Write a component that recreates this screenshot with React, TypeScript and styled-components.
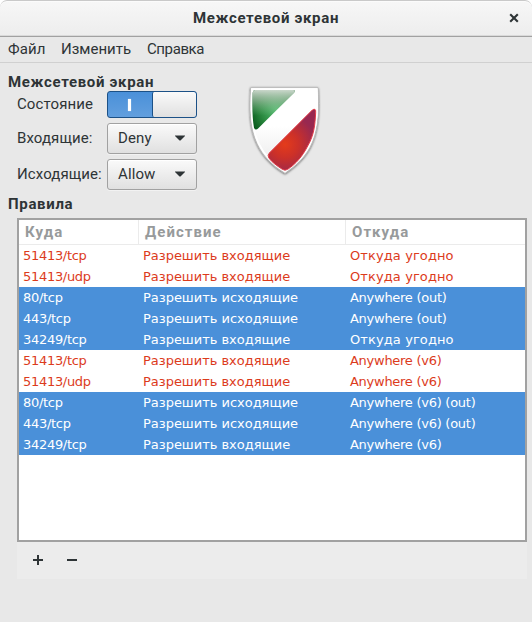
import React from 'react';
import styled, { createGlobalStyle } from 'styled-components';

const GlobalStyle = createGlobalStyle`
  * { box-sizing: border-box; }
  body { margin: 0; background: #fff; }
  button { font: inherit; color: inherit; letter-spacing: inherit; border: 0; padding: 0; background: none; }
`;

const Window = styled.div`
  width: 532px;
  height: 622px;
  overflow: hidden;
  display: flex;
  flex-direction: column;
  background: #e8e8e8;
  border-radius: 7px 7px 0 0;
  color: #2e3436;
  font-family: Roboto, sans-serif;
  font-size: 15px;
  line-height: 20px;
  white-space: nowrap;
`;

const TitleBar = styled.header`
  height: 37px;
  flex: none;
  display: grid;
  grid-template-columns: 36px 1fr 36px;
  align-items: center;
  padding-bottom: 2px;
  background: linear-gradient(#f7f7f7, #ededed);
  border: 1px solid #c9c9c9;
  border-width: 1px 0 1px;
  border-bottom-color: #a1a1a1;
  border-radius: 7px 7px 0 0;
  box-shadow: inset 0 1px #fbfbfb, inset 0 -1px #d9d9d9;
`;

const Title = styled.h1`
  grid-column: 2;
  margin: 0;
  text-align: center;
  font-size: 15px;
  font-weight: 700;
  letter-spacing: 0.67px;
`;

const CloseButton = styled.button`
  display: flex;
  justify-content: center;
`;

const MenuBar = styled.nav`
  height: 26px;
  flex: none;
  display: flex;
  align-items: center;
  gap: 16px;
  padding: 0 0 1px 8px;
  border-bottom: 1px solid #d0d0d0;
`;

const MenuItem = styled.button<{ $width: number; $spacing: number }>`
  width: ${(p) => p.$width}px;
  text-align: left;
  letter-spacing: ${(p) => p.$spacing}px;
`;

const Content = styled.main`
  flex: 1;
  padding: 9px 5px 0 8px;
`;

const SectionTitle = styled.h2`
  margin: 0;
  font-size: 15px;
  font-weight: 700;
  line-height: 20px;
  letter-spacing: 0.67px;
`;

const Overview = styled.div`
  display: flex;
  height: 102px;
`;

const Settings = styled.div`
  display: grid;
  grid-template-columns: 90px 90px;
  grid-template-rows: 27px 31px 31px;
  row-gap: 5px;
  align-content: start;
  padding-left: 9px;
  margin-top: -1px;
`;

const Label = styled.label<{ $spacing: number }>`
  align-self: center;
  padding-bottom: 2px;
  letter-spacing: ${(p) => p.$spacing}px;
`;

const Toggle = styled.button`
  display: grid;
  grid-template-columns: 45px 45px;
  height: 27px;
  border: 1px solid #1c5187;
  border-radius: 3px;
  background: linear-gradient(#4a90d9, #629fde);
  overflow: hidden;
`;

const ToggleOn = styled.span`
  display: flex;
  align-items: center;
  justify-content: center;
  height: 25px;
`;

const ToggleMark = styled.i`
  width: 3px;
  height: 12px;
  margin-left: -2px;
  background: #fff;
  box-shadow: 0 0 1px #fff;
`;

const ToggleKnob = styled.span`
  width: 44px;
  height: 25px;
  margin-left: -1px;
  border-left: 1px solid #1c5187;
  border-radius: 2px;
  background: linear-gradient(#fafafa, #e0e0e0);
`;

const Select = styled.button`
  display: flex;
  align-items: center;
  justify-content: space-between;
  height: 31px;
  padding: 0 11px 2px 10px;
  border: 1px solid #a1a1a1;
  border-radius: 3px;
  background: linear-gradient(#fafafa, #e0e0e0);
  box-shadow: inset 0 1px #fff, 0 1px #f2f2f2;
  letter-spacing: 0.1px;
`;

const ShieldSlot = styled.div`
  margin: -17px 0 0 38px;
  height: 110px;
`;

const Rules = styled.section`
  margin: 4px 0 0 9px;
`;

const Table = styled.div`
  width: 510px;
  height: 324px;
  border: 2px solid #a1a1a1;
  background: #fff;
`;

const HeaderRow = styled.div`
  display: grid;
  grid-template-columns: 120px 207px 1fr;
  height: 25px;
  border-bottom: 1px solid #ebebeb;
`;

const HeaderCell = styled.div`
  padding-left: 6px;
  line-height: 24px;
  border-right: 1px solid #ebebeb;
  font-weight: 700;
  letter-spacing: 1.05px;
  color: #979a9b;
  &:last-child { border-right: 0; }
`;

const Row = styled.div<{ $selected: boolean }>`
  display: grid;
  grid-template-columns: 120px 207px 1fr;
  height: 21px;
  background: ${(p) => (p.$selected ? '#4a90d9' : '#fff')};
  color: ${(p) => (p.$selected ? '#fff' : '#dc3b1c')};
  font-family: 'DejaVu Sans', sans-serif;
  font-size: 13px;
  line-height: 21px;
`;

const Cell = styled.span<{ $spacing: number }>`
  padding-left: 4px;
  letter-spacing: ${(p) => p.$spacing}px;
`;

const Toolbar = styled.div`
  width: 510px;
  height: 37px;
  display: flex;
  align-items: center;
  gap: 24px;
  padding: 0 0 1px 16px;
  background: #ececec;
`;

const ToolButton = styled.button`
  display: flex;
`;

const CloseIcon = () => (
  <svg width="10" height="10" viewBox="0 0 10 10">
    <path d="M1.2 1.2 8.8 8.8M8.8 1.2 1.2 8.8" stroke="#2e3436" strokeWidth="2.1" />
  </svg>
);

const ArrowIcon = () => (
  <svg width="10" height="6" viewBox="0 0 10 6">
    <path d="M0 .5h10v.5L5.5 5.5h-1L0 1z" fill="#2e3436" />
  </svg>
);

const ShieldIcon = () => (
  <svg width="100" height="110" viewBox="0 0 300 330">
    <defs>
      <linearGradient id="face" x1="0" y1="0" x2="0" y2="1">
        <stop offset="0" stopColor="#fff" />
        <stop offset=".45" stopColor="#fff" />
        <stop offset="1" stopColor="#e6e6e6" />
      </linearGradient>
      <radialGradient id="green" gradientUnits="userSpaceOnUse" cx="125" cy="105" r="85">
        <stop offset="0" stopColor="#56bd72" />
        <stop offset=".55" stopColor="#2b8a40" />
        <stop offset="1" stopColor="#07591b" />
      </radialGradient>
      <linearGradient id="gloss" x1="0" y1="0" x2="0" y2="1">
        <stop offset="0" stopColor="#d4ddd4" stopOpacity=".95" />
        <stop offset=".25" stopColor="#b6c9b7" stopOpacity=".65" />
        <stop offset=".65" stopColor="#8cc497" stopOpacity="0" />
      </linearGradient>
      <radialGradient id="red" gradientUnits="userSpaceOnUse" cx="150" cy="208" r="92">
        <stop offset="0" stopColor="#e43b1b" />
        <stop offset=".45" stopColor="#cb3029" />
        <stop offset="1" stopColor="#982850" />
      </radialGradient>
      <filter id="shadow" x="-10%" y="-10%" width="120%" height="120%">
        <feDropShadow dx="0" dy="2" stdDeviation="3.2" floodColor="#000" floodOpacity=".65" />
      </filter>
    </defs>
    <path
      d="M47 38H249C252 96 253 150 232 202C215 245 184 272 150 295C111 272 84 244 67 208C42 155 44 98 47 38Z"
      fill="url(#face)"
      stroke="#aaa"
      strokeWidth="2"
      filter="url(#shadow)"
    />
    <path d="M51 42H245C249 98 248 148 229 198C213 240 184 267 150 290C113 267 87 239 71 205C47 153 48 99 51 42Z" fill="none" stroke="#fff" strokeWidth="5" />
    <path d="M61 45H174Q184 46 177 53L70 160Q61 168 57 158C51 126 52 87 53 54Q54 45 61 45Z" fill="url(#green)" />
    <path d="M61 45H174Q184 46 177 53L70 160Q61 168 57 158C51 126 52 87 53 54Q54 45 61 45Z" fill="url(#gloss)" />
    <path
      d="M232 105Q243 98 242 112C240 151 237 181 218 213C202 245 181 268 158 283Q150 288 142 283C124 271 111 262 101 248Q97 241 103 234Z"
      fill="url(#red)"
      stroke="#e23b48"
      strokeWidth="3"
    />
  </svg>
);

const AddIcon = () => (
  <svg width="10" height="10" viewBox="0 0 10 10">
    <path d="M4 0h2v4h4v2H6v4H4V6H0V4h4z" fill="#2e3436" />
  </svg>
);

const RemoveIcon = () => (
  <svg width="10" height="10" viewBox="0 0 10 10">
    <path d="M0 4h10v2H0z" fill="#2e3436" />
  </svg>
);

const incoming = 'Разрешить входящие';
const outgoing = 'Разрешить исходящие';
const anywhere = 'Откуда угодно';

const rules = [
  { to: '51413/tcp', action: incoming, from: anywhere, selected: false },
  { to: '51413/udp', action: incoming, from: anywhere, selected: false },
  { to: '80/tcp', action: outgoing, from: 'Anywhere (out)', selected: true },
  { to: '443/tcp', action: outgoing, from: 'Anywhere (out)', selected: true },
  { to: '34249/tcp', action: incoming, from: anywhere, selected: true },
  { to: '51413/tcp', action: incoming, from: 'Anywhere (v6)', selected: false },
  { to: '51413/udp', action: incoming, from: 'Anywhere (v6)', selected: false },
  { to: '80/tcp', action: outgoing, from: 'Anywhere (v6) (out)', selected: true },
  { to: '443/tcp', action: outgoing, from: 'Anywhere (v6) (out)', selected: true },
  { to: '34249/tcp', action: incoming, from: 'Anywhere (v6)', selected: true },
];

export default function App() {
  return (
    <>
      <GlobalStyle />
      <Window>
        <TitleBar>
          <Title>Межсетевой экран</Title>
          <CloseButton aria-label="Закрыть"><CloseIcon /></CloseButton>
        </TitleBar>
        <MenuBar>
          <MenuItem $width={37} $spacing={0.1}>Файл</MenuItem>
          <MenuItem $width={70} $spacing={0}>Изменить</MenuItem>
          <MenuItem $width={58} $spacing={-0.4}>Справка</MenuItem>
        </MenuBar>
        <Content>
          <SectionTitle>Межсетевой экран</SectionTitle>
          <Overview>
            <Settings>
              <Label $spacing={0.1}>Состояние</Label>
              <Toggle role="switch" aria-checked="true">
                <ToggleOn><ToggleMark /></ToggleOn>
                <ToggleKnob />
              </Toggle>
              <Label $spacing={0.1}>Входящие:</Label>
              <Select>Deny<ArrowIcon /></Select>
              <Label $spacing={0.1}>Исходящие:</Label>
              <Select>Allow<ArrowIcon /></Select>
            </Settings>
            <ShieldSlot><ShieldIcon /></ShieldSlot>
          </Overview>
          <SectionTitle>Правила</SectionTitle>
          <Rules>
            <Table>
              <HeaderRow>
                <HeaderCell>Куда</HeaderCell>
                <HeaderCell>Действие</HeaderCell>
                <HeaderCell>Откуда</HeaderCell>
              </HeaderRow>
              {rules.map((rule, i) => (
                <Row key={i} $selected={rule.selected}>
                  <Cell $spacing={-0.3}>{rule.to}</Cell>
                  <Cell $spacing={-0.02}>{rule.action}</Cell>
                  <Cell $spacing={rule.from === anywhere ? 0.1 : -0.27}>{rule.from}</Cell>
                </Row>
              ))}
            </Table>
            <Toolbar>
              <ToolButton aria-label="Добавить"><AddIcon /></ToolButton>
              <ToolButton aria-label="Удалить"><RemoveIcon /></ToolButton>
            </Toolbar>
          </Rules>
        </Content>
      </Window>
    </>
  );
}
